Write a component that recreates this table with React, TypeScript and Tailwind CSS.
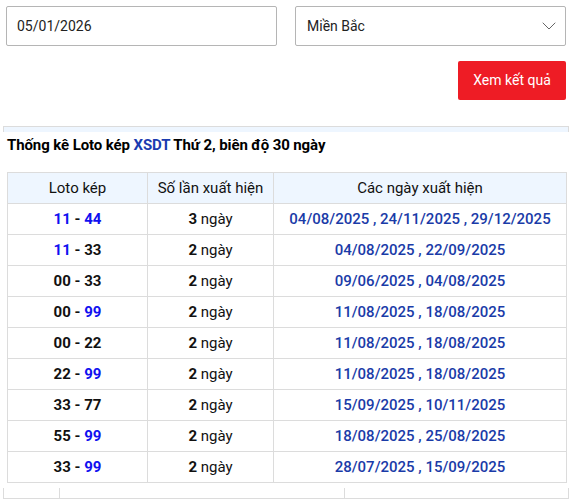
import { ChevronDown } from 'lucide-react';

type Part = { text: string; blue: boolean };
type Row = { pair: [Part, Part]; count: number; days: string[] };

const rows: Row[] = [
  { pair: [{ text: '11', blue: true }, { text: '44', blue: true }], count: 3, days: ['04/08/2025', '24/11/2025', '29/12/2025'] },
  { pair: [{ text: '11', blue: true }, { text: '33', blue: false }], count: 2, days: ['04/08/2025', '22/09/2025'] },
  { pair: [{ text: '00', blue: false }, { text: '33', blue: false }], count: 2, days: ['09/06/2025', '04/08/2025'] },
  { pair: [{ text: '00', blue: false }, { text: '99', blue: true }], count: 2, days: ['11/08/2025', '18/08/2025'] },
  { pair: [{ text: '00', blue: false }, { text: '22', blue: false }], count: 2, days: ['11/08/2025', '18/08/2025'] },
  { pair: [{ text: '22', blue: false }, { text: '99', blue: true }], count: 2, days: ['11/08/2025', '18/08/2025'] },
  { pair: [{ text: '33', blue: false }, { text: '77', blue: false }], count: 2, days: ['15/09/2025', '10/11/2025'] },
  { pair: [{ text: '55', blue: false }, { text: '99', blue: true }], count: 2, days: ['18/08/2025', '25/08/2025'] },
  { pair: [{ text: '33', blue: false }, { text: '99', blue: true }], count: 2, days: ['28/07/2025', '15/09/2025'] },
];

const num = (p: Part) => (
  <span className={p.blue ? 'text-[#1010f0]' : 'text-[#111]'}>{p.text}</span>
);

export default function App() {
  return (
    <div className="min-h-[501px] bg-white font-['Roboto',sans-serif] text-[14px] text-[#111]">
      <div className="grid grid-cols-2 gap-[18px] px-[6px] pt-[6px]">
        <div className="flex h-[40px] items-center rounded-[2px] border border-[#b5b5b5] px-[10px] text-[#222]">
          05/01/2026
        </div>
        <div className="flex h-[40px] items-center justify-between rounded-[2px] border border-[#b5b5b5] pl-[11px] pr-[4px] text-[#222]">
          <span>Miền Bắc</span>
          <ChevronDown size={24} strokeWidth={1} className="text-[#666]" />
        </div>
      </div>

      <div className="flex justify-end px-[6px] pt-[15px]">
        <button className="h-[39px] w-[108px] rounded-[2px] bg-[#ee1c25] text-[14px] text-white">
          Xem kết quả
        </button>
      </div>

      <div className="mx-[3px] mt-[26px] text-[15px]">
        <div className="h-[6px] border-x border-t border-[#dcdcdc] bg-[#eef6ff]" />
        <h2 className="px-[4px] pt-[3px] pb-[17px] text-[15px] font-bold leading-[20px] tracking-[-0.1px] text-black">
          Thống kê Loto kép <span className="text-[#1a3bb0]">XSDT</span> Thứ 2, biên độ 30 ngày
        </h2>

        <table className="mx-[4px] w-[560px] table-fixed border-collapse text-center">
          <colgroup>
            <col className="w-[140px]" />
            <col className="w-[126px]" />
            <col />
          </colgroup>
          <thead>
            <tr className="h-[31px] bg-[#eef6ff]">
              <th className="border border-[#dcdcdc] font-normal">Loto kép</th>
              <th className="border border-[#dcdcdc] font-normal">Số lần xuất hiện</th>
              <th className="border border-[#dcdcdc] font-normal">Các ngày xuất hiện</th>
            </tr>
          </thead>
          <tbody>
            {rows.map((r, i) => (
              <tr key={i} className="h-[31px]">
                <td className="border border-[#dcdcdc] font-bold">
                  {num(r.pair[0])} - {num(r.pair[1])}
                </td>
                <td className="border border-[#dcdcdc]">
                  <b>{r.count}</b> ngày
                </td>
                <td className="border border-[#dcdcdc] font-medium text-[#1a3ba8]">
                  {r.days.join(' , ')}
                </td>
              </tr>
            ))}
          </tbody>
        </table>

        <div className="mt-[5px] grid h-[11px] grid-cols-[56px_285px_1fr] border-x border-b border-[#dcdcdc]">
          <div className="border-r border-[#dcdcdc]" />
          <div className="border-r border-[#dcdcdc]" />
          <div />
        </div>
      </div>
    </div>
  );
}
